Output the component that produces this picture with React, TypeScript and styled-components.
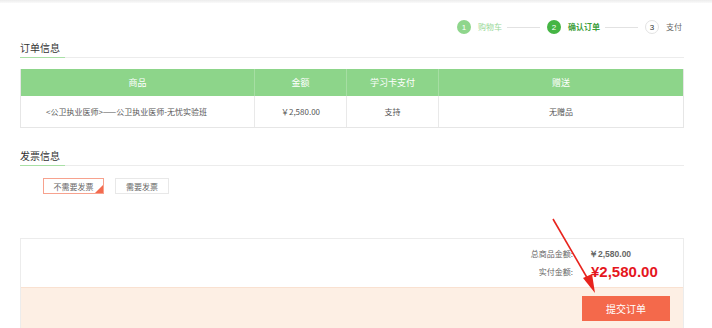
import React from "react";
import styled, { createGlobalStyle } from "styled-components";

const Global = createGlobalStyle`
  html, body { margin: 0; padding: 0; background: #fff; }
  body { font-family: "Noto Sans CJK SC", "Liberation Sans", sans-serif; color: #333; }
  #root { position: relative; width: 712px; height: 328px; overflow: hidden; }
`;

const Page = styled.div`
  position: relative;
  height: 328px;
  overflow: hidden;
`;

const TopShade = styled.div`
  height: 3px;
  background: linear-gradient(#ececec, #fafafa);
`;

const Content = styled.div`
  padding: 0 28px 0 20px;
  display: flex;
  flex-direction: column;
`;

const Steps = styled.div`
  margin-top: 17px;
  display: flex;
  justify-content: flex-end;
  align-items: center;
  height: 14px;
  padding-right: 2px;
`;

const Step = styled.div`
  display: flex;
  align-items: center;
  gap: 7px;
`;

const Circle = styled.span<{ $state: "done" | "active" | "todo" }>`
  width: 14px;
  height: 14px;
  box-sizing: border-box;
  border-radius: 50%;
  display: flex;
  align-items: center;
  justify-content: center;
  font-family: "Liberation Sans", sans-serif;
  font-size: 8px;
  color: ${(p) => (p.$state === "todo" ? "#333" : "#fff")};
  background: ${(p) =>
    p.$state === "done" ? "#8fd68c" : p.$state === "active" ? "#45b544" : "#fff"};
  border: ${(p) => (p.$state === "todo" ? "1px solid #e3e3e3" : "none")};
`;

const StepText = styled.span<{ $state: "done" | "active" | "todo" }>`
  font-size: 8px;
  line-height: 14px;
  white-space: nowrap;
  font-weight: ${(p) => (p.$state === "active" ? 700 : 400)};
  color: ${(p) =>
    p.$state === "done" ? "#9ad897" : p.$state === "active" ? "#3d9e3b" : "#666"};
`;

const StepLine = styled.span`
  width: 33px;
  height: 1px;
  background: #e2e2e2;
  margin: 0 7px 0 5px;
`;

const SectionTitle = styled.div<{ $top: number }>`
  margin-top: ${(p) => p.$top}px;
  display: flex;
  border-bottom: 1px solid #ececec;
`;

const TitleText = styled.span`
  width: 45px;
  font-size: 10px;
  line-height: 14px;
  padding-bottom: 2px;
  color: #333;
  border-bottom: 1px solid #a9e0a6;
  margin-bottom: -1px;
`;

const Table = styled.div`
  margin-top: 11px;
  border: 1px solid #e6e6e6;
  border-top: none;
  display: grid;
  grid-template-columns: 233px 92px 92px 1fr;
`;

const HeadCell = styled.div`
  height: 27px;
  background: #8dd58a;
  color: #fff;
  font-size: 9px;
  display: flex;
  align-items: center;
  justify-content: center;
  border-left: 1px solid #a6dea3;
  &:first-child { border-left: none; }
`;

const BodyCell = styled.div<{ $padRight?: number }>`
  height: 31px;
  color: #555;
  font-size: 8px;
  display: flex;
  align-items: center;
  justify-content: center;
  box-sizing: border-box;
  padding-right: ${(p) => p.$padRight ?? 0}px;
  border-left: 1px solid #e9e9e9;
  &:nth-child(5) { border-left: none; }
  white-space: nowrap;
`;

const Choices = styled.div`
  margin-top: 12px;
  padding-left: 23px;
  display: flex;
  gap: 11px;
`;

const Choice = styled.div<{ $selected?: boolean; $w: number }>`
  position: relative;
  width: ${(p) => p.$w}px;
  height: 16px;
  box-sizing: border-box;
  border: 1px solid ${(p) => (p.$selected ? "#f7a28e" : "#e8e8e8")};
  font-size: 8px;
  color: #666;
  display: flex;
  align-items: center;
  justify-content: center;
`;

const Corner = styled.span`
  position: absolute;
  right: 0;
  bottom: 0;
  width: 0;
  height: 0;
  border-style: solid;
  border-width: 0 0 8px 8px;
  border-color: transparent transparent #f36b4f transparent;
`;

const Summary = styled.div`
  margin-top: 44px;
  border: 1px solid #ececec;
  display: flex;
  flex-direction: column;
`;

const Totals = styled.div`
  padding: 8px 0 5px;
  display: grid;
  grid-template-columns: auto 94px;
  justify-content: end;
  column-gap: 16px;
  row-gap: 1px;
  align-items: center;
`;

const Label = styled.span`
  font-size: 8px;
  color: #666;
  text-align: right;
  line-height: 14px;
`;

const SmallValue = styled.span`
  font-family: "Liberation Sans", sans-serif;
  font-size: 8.5px;
  font-weight: 700;
  color: #666;
  line-height: 14px;
`;

const BigValue = styled.span`
  font-family: "Liberation Sans", sans-serif;
  font-size: 15px;
  font-weight: 700;
  color: #e5161d;
  line-height: 20px;
  margin-left: 2px;
`;

const ActionBar = styled.div`
  border-top: 1px solid #f9e1d1;
  background: #fdefe4;
  height: 60px;
  display: flex;
  justify-content: flex-end;
  align-items: flex-start;
  padding: 8px 13px 0 0;
`;

const Submit = styled.button`
  width: 88px;
  height: 25px;
  border: none;
  background: #f4694b;
  color: #fff;
  font-family: "Noto Sans CJK SC", sans-serif;
  font-size: 10px;
  cursor: pointer;
  padding: 0;
`;

const Arrow = styled.svg`
  position: absolute;
  left: 0;
  top: 0;
  pointer-events: none;
`;

type S = "done" | "active" | "todo";
const steps: { n: number; t: string; s: S }[] = [
  { n: 1, t: "购物车", s: "done" },
  { n: 2, t: "确认订单", s: "active" },
  { n: 3, t: "支付", s: "todo" },
];

export default function App() {
  return (
    <Page>
      <Global />
      <TopShade />
      <Content>
        <Steps>
          {steps.map((st, i) => (
            <React.Fragment key={st.n}>
              {i > 0 && <StepLine />}
              <Step>
                <Circle $state={st.s}>{st.n}</Circle>
                <StepText $state={st.s}>{st.t}</StepText>
              </Step>
            </React.Fragment>
          ))}
        </Steps>

        <SectionTitle $top={7}>
          <TitleText>订单信息</TitleText>
        </SectionTitle>

        <Table>
          <HeadCell>商品</HeadCell>
          <HeadCell>金额</HeadCell>
          <HeadCell>学习卡支付</HeadCell>
          <HeadCell>赠送</HeadCell>
          <BodyCell $padRight={22}>&lt;公卫执业医师&gt;——公卫执业医师-无忧实验班</BodyCell>
          <BodyCell>￥2,580.00</BodyCell>
          <BodyCell>支持</BodyCell>
          <BodyCell>无赠品</BodyCell>
        </Table>

        <SectionTitle $top={21}>
          <TitleText>发票信息</TitleText>
        </SectionTitle>

        <Choices>
          <Choice $selected $w={61}>
            不需要发票
            <Corner />
          </Choice>
          <Choice $w={54}>需要发票</Choice>
        </Choices>

        <Summary>
          <Totals>
            <Label>总商品金额:</Label>
            <SmallValue>￥2,580.00</SmallValue>
            <Label>实付金额:</Label>
            <BigValue>¥2,580.00</BigValue>
          </Totals>
          <ActionBar>
            <Submit>提交订单</Submit>
          </ActionBar>
        </Summary>
      </Content>

      <Arrow width="712" height="328" viewBox="0 0 712 328">
        <line x1="553" y1="219" x2="589" y2="281" stroke="#e8231d" strokeWidth="1.6" />
        <polygon points="595,293 583,278 592,274" fill="#e8231d" />
      </Arrow>
    </Page>
  );
}
